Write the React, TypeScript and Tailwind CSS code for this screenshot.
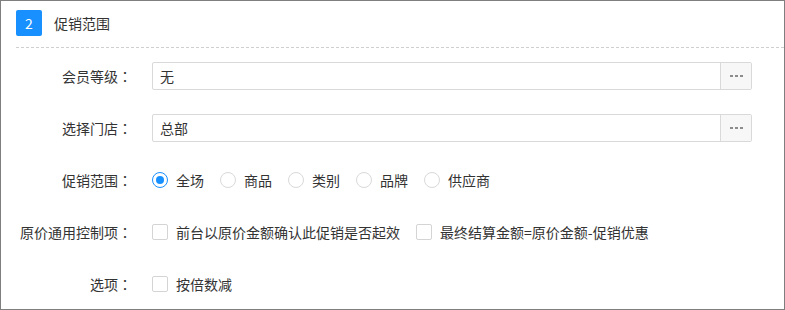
import React from 'react'

// ── Small form controls ───────────────────────────────────────────────────────

const Dots = () => (
  <span className="flex items-center gap-[2px]">
    <span className="w-[3px] h-[2px] bg-[#8c8c8c]" />
    <span className="w-[3px] h-[2px] bg-[#8c8c8c]" />
    <span className="w-[3px] h-[2px] bg-[#8c8c8c]" />
  </span>
)

const PickerInput = ({ value }: { value: string }) => (
  <div className="flex flex-1 h-[28px] border border-[#d9d9d9] rounded-[2px] bg-white">
    <div className="flex-1 flex items-center pl-[7px] text-[#333]">{value}</div>
    <button className="w-[31px] flex items-center justify-center border-l border-[#d9d9d9] bg-[#f7f7f7]">
      <Dots />
    </button>
  </div>
)

const Radio = ({ label, checked }: { label: string; checked?: boolean }) => (
  <label className="flex items-center gap-[8px]">
    <span
      className={
        checked
          ? 'w-[16px] h-[16px] rounded-full border border-[#1890ff] flex items-center justify-center bg-white'
          : 'w-[16px] h-[16px] rounded-full border border-[#d9d9d9] bg-white'
      }
    >
      {checked && <span className="w-[8px] h-[8px] rounded-full bg-[#1890ff]" />}
    </span>
    <span>{label}</span>
  </label>
)

const Checkbox = ({ label }: { label: string }) => (
  <label className="flex items-center gap-[8px]">
    <span className="w-[16px] h-[16px] rounded-[2px] border border-[#d4d4d4] bg-white" />
    <span>{label}</span>
  </label>
)

// labels end in a centred full-width colon, as YaHei draws it
const Row = ({ label, children }: { label: string; children: React.ReactNode }) => (
  <div className="flex items-center h-[28px]">
    <div className="w-[131px] text-right whitespace-nowrap">
      {label}
      <span className="font-['Noto_Sans_CJK_TC',sans-serif]">：</span>
    </div>
    <div className="flex-1 flex items-center ml-[20px] mr-[32px]">{children}</div>
  </div>
)

// ── Main ──────────────────────────────────────────────────────────────────────

export default function App() {
  const scopes = ['全场', '商品', '类别', '品牌', '供应商']

  return (
    <div className="w-[785px] h-[310px] border border-[#7f7f7f] bg-white text-[14px] leading-none text-[#333] font-['Microsoft_YaHei','Noto_Sans_CJK_SC',sans-serif] overflow-hidden">
      {/* header */}
      <div className="ml-[15px] pt-[9px] pb-[11px] border-b border-dashed border-[#cfcfcf] flex items-center gap-[12px]">
        <span className="w-[26px] h-[26px] rounded-[2px] bg-[#1890ff] text-white flex items-center justify-center">2</span>
        <span>促销范围</span>
      </div>

      <div className="mt-[14px] flex flex-col gap-[24px]">
        <Row label="会员等级">
          <PickerInput value="无" />
        </Row>
        <Row label="选择门店">
          <PickerInput value="总部" />
        </Row>
        <Row label="促销范围">
          <div className="flex items-center gap-[16px]">
            {scopes.map((s, i) => (
              <Radio key={s} label={s} checked={i === 0} />
            ))}
          </div>
        </Row>
        <Row label="原价通用控制项">
          <div className="flex items-center gap-[16px]">
            <Checkbox label="前台以原价金额确认此促销是否起效" />
            <Checkbox label="最终结算金额=原价金额-促销优惠" />
          </div>
        </Row>
        <Row label="选项">
          <Checkbox label="按倍数减" />
        </Row>
      </div>
    </div>
  )
}
